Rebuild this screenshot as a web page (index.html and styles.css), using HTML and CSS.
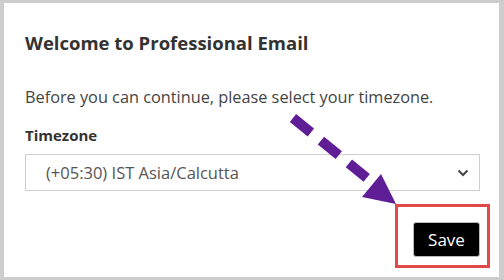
FILE: index.html
```html
<!DOCTYPE html>
<html>
<head>
<meta charset="utf-8">
<link rel="stylesheet" href="styles.css">
</head>
<body>
<div class="dialog">
  <h1 class="title">Welcome to Professional Email</h1>
  <p class="intro">Before you can continue, please select your timezone.</p>
  <label class="label">Timezone</label>
  <div class="select">
    <span class="select-text">(+05:30) IST Asia/Calcutta</span>
    <svg class="chevron" width="12" height="8" viewBox="0 0 12 8"><path d="M1.5 1.5 L6 6 L10.5 1.5" fill="none" stroke="#444" stroke-width="2"/></svg>
  </div>
  <div class="actions">
    <button class="save">Save</button>
  </div>
  <div class="highlight"></div>
  <svg class="arrow" width="504" height="280" viewBox="0 0 504 280">
    <line x1="293" y1="118" x2="373" y2="183" stroke="#5f1d96" stroke-width="10" stroke-linecap="butt" stroke-dasharray="23 13"/>
    <polygon points="381,174 362,197 396,204" fill="#5f1d96"/>
  </svg>
</div>
</body>
</html>
```
FILE: styles.css
```css
html, body { margin: 0; padding: 0; }
body {
  width: 504px;
  height: 280px;
  background: #cdcdcd;
  font-family: "Open Sans", "Noto Sans", sans-serif;
  overflow: hidden;
}
.dialog {
  position: relative;
  margin: 3px 5px 0 4px;
  width: 495px;
  height: 274px;
  background: #fff;
  box-sizing: border-box;
  padding: 28px 19px 0 21px;
  display: flex;
  flex-direction: column;
}
.title {
  margin: 0;
  font-size: 18.5px;
  font-weight: 700;
  color: #333;
  line-height: 24px;
}
.intro {
  margin: 31px 0 0;
  font-size: 16.3px;
  color: #444;
  line-height: 22px;
}
.label {
  margin-top: 17px;
  font-size: 15px;
  font-weight: 700;
  color: #333;
  line-height: 20px;
}
.select {
  margin-top: 9px;
  height: 37px;
  border: 1px solid #cfcfcf;
  box-sizing: border-box;
  display: flex;
  align-items: center;
  padding: 0 10px 0 20px;
}
.select-text {
  flex: 1;
  font-size: 16.5px;
  color: #555;
}
.chevron { display: block; }
.actions {
  display: flex;
  justify-content: flex-end;
  margin-top: 31px;
}
.save {
  width: 67px;
  height: 35px;
  background: #000;
  color: #fff;
  border: 1px solid #bbb;
  border-radius: 3px;
  font-family: "Open Sans", sans-serif;
  font-size: 17px;
  padding: 0;
}
.highlight {
  position: absolute;
  left: 391px;
  top: 201px;
  width: 95px;
  height: 64px;
  border: 3px solid #e24a4a;
  box-sizing: border-box;
}
.arrow {
  position: absolute;
  left: -4px;
  top: -3px;
}
```
